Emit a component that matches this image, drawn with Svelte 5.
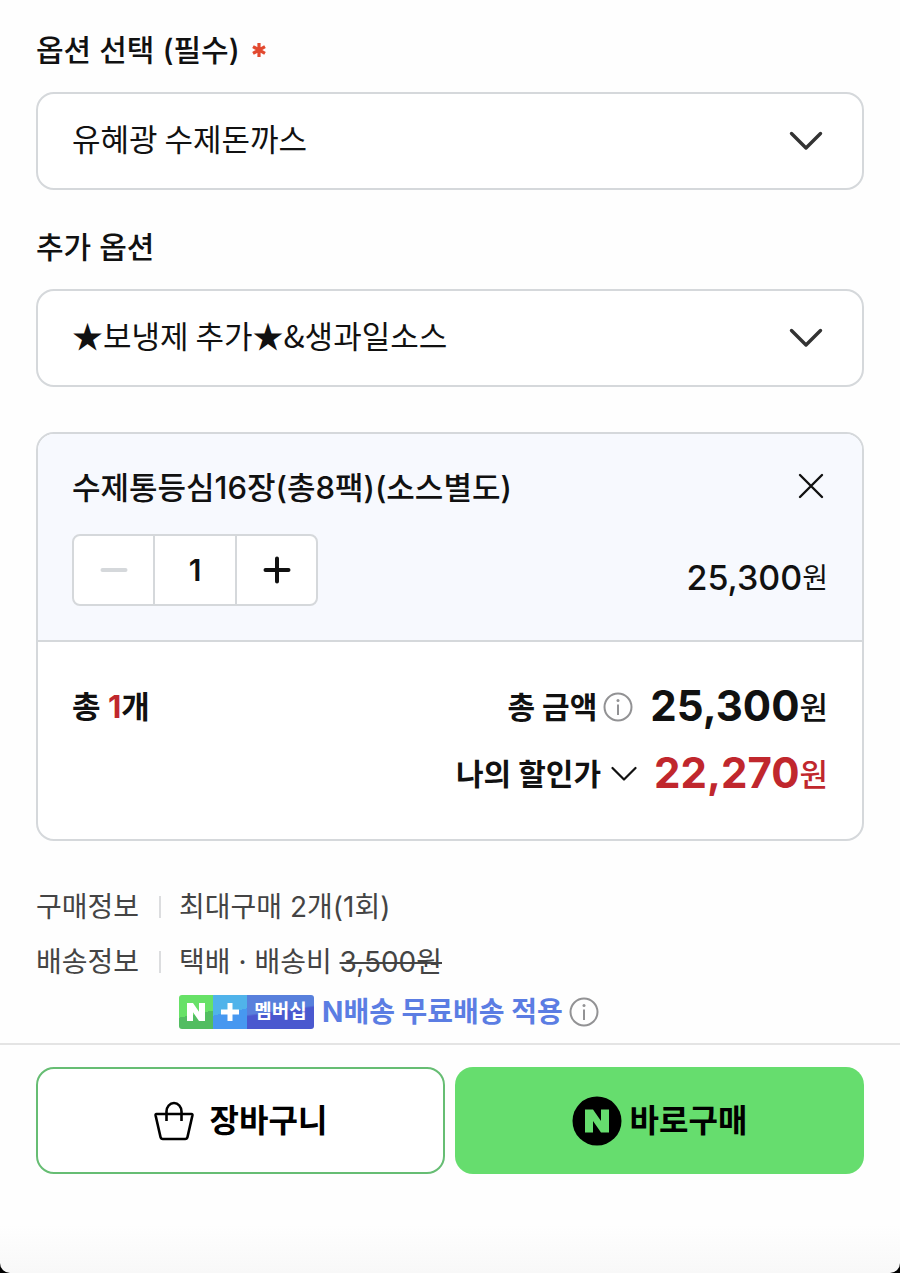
<script lang="ts">
  const UNIT_PRICE = 25300;
  const UNIT_DISCOUNTED = 22270;
  const MAX_COUNT = 2;

  const mainOptions = ['유혜광 수제돈까스'];
  const extraOptions = ['★보냉제 추가★&생과일소스'];

  let mainOption = $state(mainOptions[0]);
  let extraOption = $state(extraOptions[0]);
  let count = $state(1);

  let total = $derived((UNIT_PRICE * count).toLocaleString('en-US'));
  let discounted = $derived((UNIT_DISCOUNTED * count).toLocaleString('en-US'));
</script>

{#snippet chevron()}
  <svg class="chevron" width="34" height="20" viewBox="0 0 34 20" aria-hidden="true">
    <path d="M2.500 2.500 17 17 31.500 2.500" fill="none" stroke="#333" stroke-width="3.400" stroke-linecap="round" stroke-linejoin="round" />
  </svg>
{/snippet}

{#snippet infoIcon()}
  <svg width="30" height="30" viewBox="0 0 30 30" aria-hidden="true">
    <circle cx="15" cy="15" r="13.500" fill="none" stroke="#929294" stroke-width="2" />
    <circle cx="15" cy="8.500" r="1.500" fill="#929294" />
    <path d="M15 12.500v10.500" stroke="#929294" stroke-width="2" />
  </svg>
{/snippet}

<div class="sheet">
  <main class="content">
    <div class="field">
      <label for="main-option">
        옵션 선택 (필수)
        <svg class="required" width="14" height="14" viewBox="0 0 14 14" aria-hidden="true">
          <path d="M7 0v14M1 3.600l12 6.800M13 3.600 1 10.400" stroke="#e2492f" stroke-width="3.200" />
        </svg>
      </label>
      <div class="select-box">
        <select id="main-option" bind:value={mainOption}>
          {#each mainOptions as option}
            <option value={option}>{option}</option>
          {/each}
        </select>
        {@render chevron()}
      </div>
    </div>

    <div class="field">
      <label for="extra-option">추가 옵션</label>
      <div class="select-box">
        <select id="extra-option" bind:value={extraOption}>
          {#each extraOptions as option}
            <option value={option}>{option}</option>
          {/each}
        </select>
        {@render chevron()}
      </div>
    </div>

    <section class="card">
      <div class="item">
        <div class="item-head">
          <span class="item-name">수제통등심16장(총8팩)(소스별도)</span>
          <button class="remove" aria-label="삭제">
            <svg width="26" height="26" viewBox="0 0 26 26" aria-hidden="true">
              <path d="M2 2l22 22M24 2 2 24" stroke="#111" stroke-width="2.400" stroke-linecap="round" />
            </svg>
          </button>
        </div>
        <div class="item-foot">
          <div class="stepper">
            <button aria-label="수량 빼기" disabled={count <= 1} onclick={() => count--}>
              <svg width="28" height="28" viewBox="0 0 28 28" aria-hidden="true">
                <path d="M2.500 14h23" stroke="currentColor" stroke-width="4" stroke-linecap="round" />
              </svg>
            </button>
            <input type="text" inputmode="numeric" aria-label="수량" readonly value={count} />
            <button aria-label="수량 더하기" disabled={count >= MAX_COUNT} onclick={() => count++}>
              <svg width="28" height="28" viewBox="0 0 28 28" aria-hidden="true">
                <path d="M2.500 14h23M14 2.500v23" stroke="currentColor" stroke-width="4" stroke-linecap="round" />
              </svg>
            </button>
          </div>
          <span class="item-price">{total}<span class="won">원</span></span>
        </div>
      </div>

      <div class="summary">
        <span class="total-count">총 <em>{count}</em>개</span>
        <div class="totals">
          <div class="total-row">
            <span class="total-label">총 금액</span>
            <button class="icon-button" aria-label="총 금액 안내">{@render infoIcon()}</button>
            <strong class="total-price">{total}<span class="won">원</span></strong>
          </div>
          <div class="total-row discount">
            <button class="total-label toggle">
              나의 할인가
              <svg width="26" height="16" viewBox="0 0 26 16" aria-hidden="true">
                <path d="M1.500 2 13 13.500 24.500 2" fill="none" stroke="#111" stroke-width="2.200" stroke-linecap="round" stroke-linejoin="round" />
              </svg>
            </button>
            <strong class="total-price">{discounted}<span class="won">원</span></strong>
          </div>
        </div>
      </div>
    </section>

    <dl class="info">
      <div class="info-row">
        <dt>구매정보</dt>
        <dd>최대구매 2개(1회)</dd>
      </div>
      <div class="info-row">
        <dt>배송정보</dt>
        <dd>
          택배 · 배송비 <del>3,500원</del>
          <div class="membership">
            <span class="badge">
              <span class="badge-n">
                <svg width="18" height="18" viewBox="0 0 18 18" role="img" aria-label="N">
                  <path d="M0 0h6l6 8.800V0h6v18h-6L6 9.200V18H0z" fill="#fff" />
                </svg>
              </span>
              <span class="badge-plus">
                <svg width="18" height="18" viewBox="0 0 18 18" role="img" aria-label="플러스">
                  <path d="M0 9h18M9 0v18" stroke="#fff" stroke-width="5" />
                </svg>
              </span>
              <span class="badge-text">멤버십</span>
            </span>
            <span class="free-shipping">N배송 무료배송 적용</span>
            <button class="icon-button" aria-label="무료배송 안내">{@render infoIcon()}</button>
          </div>
        </dd>
      </div>
    </dl>
  </main>

  <footer class="actions">
    <button class="action cart">
      <svg width="40" height="40" viewBox="0 0 40 40" aria-hidden="true">
        <path
          d="M2.500 13h35q1.200 0 .900 1.500L33.500 36q-.500 2-2.300 2H8.800q-1.800 0-2.300-2L1.600 14.500Q1.300 13 2.500 13zM12.500 20v-9.500a7.500 8.500 0 0 1 15 0V20"
          fill="none"
          stroke="#000"
          stroke-width="2.600"
          stroke-linejoin="round"
        />
      </svg>
      장바구니
    </button>
    <button class="action buy">
      <svg width="50" height="50" viewBox="0 0 50 50" aria-hidden="true">
        <circle cx="25" cy="25" r="24.500" fill="#000" />
        <path d="M13 13.500h8l8 11.500V13.500h8v23h-8L21 25v11.500h-8z" fill="#66dd6e" />
      </svg>
      바로구매
    </button>
  </footer>
</div>

<style>
  :global(body) {
    background: #000;
  }

  .sheet {
    min-height: 100vh;
    box-sizing: border-box;
    background: linear-gradient(to top, #f8f8f8, #fefefe 48px);
    border-radius: 0 0 10px 10px;
    color: #111;
    font-family: Inter, 'Noto Sans CJK KR', sans-serif;
    font-size: 30px;
    line-height: 36px;
  }

  button,
  input,
  select {
    margin: 0;
    padding: 0;
    border: 0;
    border-radius: 0;
    background: none;
    color: inherit;
    font: inherit;
  }

  button {
    cursor: pointer;
  }

  svg {
    display: block;
    flex: none;
  }

  .content {
    padding: 32px 36px 11px;
  }

  .field {
    margin-bottom: 39px;
  }

  .field label {
    display: flex;
    align-items: center;
    gap: 12px;
    margin-bottom: 24px;
    font-weight: 500;
  }

  .select-box {
    display: grid;
    align-items: center;
  }

  .select-box > :global(*) {
    grid-area: 1 / 1;
  }

  .select-box select {
    width: 100%;
    height: 98px;
    padding: 0 80px 6px 34px;
    border: 2px solid #d5d8db;
    border-radius: 18px;
    background: #fff;
    appearance: none;
    font-family: 'Noto Sans CJK KR', sans-serif;
    font-size: 31px;
  }

  .chevron {
    justify-self: end;
    margin-right: 41px;
    pointer-events: none;
  }

  .card {
    margin-top: 45px;
    border: 2px solid #d5d8db;
    border-radius: 18px;
    background: #fff;
    overflow: hidden;
  }

  .item {
    padding: 36px 34px 34px;
    border-bottom: 2px solid #d5d8db;
    background: #f7f9fe;
  }

  .item-head {
    display: flex;
    justify-content: space-between;
    align-items: flex-start;
    margin-bottom: 28px;
  }

  .item-name {
    font-size: 31px;
    font-weight: 500;
  }

  .remove {
    padding: 3px 4px 7px;
  }

  .item-foot {
    display: flex;
    justify-content: space-between;
    align-items: flex-end;
  }

  .stepper {
    display: grid;
    grid-template-columns: 79px 84px 79px;
    height: 68px;
    border: 2px solid #d5d8db;
    border-radius: 8px;
    background: #fff;
    overflow: hidden;
  }

  .stepper button {
    display: grid;
    place-items: center;
    color: #111;
  }

  .stepper button:disabled {
    color: #d5d8db;
    cursor: default;
  }

  .stepper input {
    min-width: 0;
    border: solid #d5d8db;
    border-width: 0 2px;
    font-weight: 600;
    text-align: center;
  }

  .item-price {
    font-size: 34px;
    font-weight: 500;
    line-height: 56px;
  }

  .won {
    font-size: 31px;
    font-weight: 400;
    vertical-align: 2px;
  }

  .item-price .won {
    font-size: 28px;
  }

  .summary {
    display: flex;
    justify-content: space-between;
    padding: 43px 34px;
    line-height: 44px;
  }

  .total-count,
  .total-label {
    font-weight: 700;
  }

  .total-count {
    font-size: 31px;
  }

  .total-count em {
    color: #c0272d;
    font-style: normal;
  }

  .totals {
    display: grid;
    grid-auto-rows: 44px;
    gap: 23px;
  }

  .total-row {
    display: flex;
    justify-content: flex-end;
    align-items: center;
  }

  .toggle {
    display: flex;
    align-items: center;
    gap: 10px;
  }

  .icon-button {
    margin-left: 6px;
  }

  .total-price {
    margin-left: 17px;
    font-size: 42px;
    font-weight: 700;
  }

  .total-price .won {
    font-weight: 500;
  }

  .discount .total-price {
    color: #c0272d;
  }

  .info {
    display: grid;
    gap: 15px;
    margin: 46px 0 0;
    color: #444;
    font-size: 28px;
    line-height: 40px;
  }

  .info-row {
    display: flex;
  }

  .info dt {
    display: flex;
    align-items: center;
    height: 40px;
  }

  .info dt::after {
    content: '';
    width: 2px;
    height: 22px;
    margin: 0 18px 0 20px;
    background: #dcdddf;
  }

  .info dd {
    margin: 0;
  }

  .membership {
    display: flex;
    align-items: center;
    margin-top: 10px;
  }

  .badge {
    display: flex;
    height: 34px;
    border-radius: 3px;
    overflow: hidden;
  }

  .badge-n,
  .badge-plus,
  .badge-text {
    display: grid;
    place-items: center;
    width: 34px;
  }

  .badge-n {
    background: linear-gradient(168deg, #67e167 55%, #52bd61 55%);
  }

  .badge-plus {
    background: linear-gradient(168deg, #50b3ea 50%, #4798f0 50%);
  }

  .badge-text {
    width: 67px;
    background: linear-gradient(172deg, #5880dc 45%, #4a58cf 50%);
    color: #fff;
    font-size: 19px;
    font-weight: 700;
    line-height: 30px;
  }

  .free-shipping {
    margin-left: 8px;
    color: #5b7de3;
    font-weight: 700;
  }

  .actions {
    display: grid;
    grid-template-columns: 1fr 1fr;
    gap: 10px;
    padding: 22px 36px 98px;
    border-top: 2px solid #e4e4e4;
  }

  .action {
    display: flex;
    justify-content: center;
    align-items: center;
    height: 107px;
    border-radius: 18px;
    color: #000;
    font-size: 32px;
    font-weight: 700;
  }

  .cart {
    gap: 16px;
    border: 2px solid #66bd73;
    background: #fff;
  }

  .buy {
    gap: 8px;
    background: #66dd6e;
  }
</style>
